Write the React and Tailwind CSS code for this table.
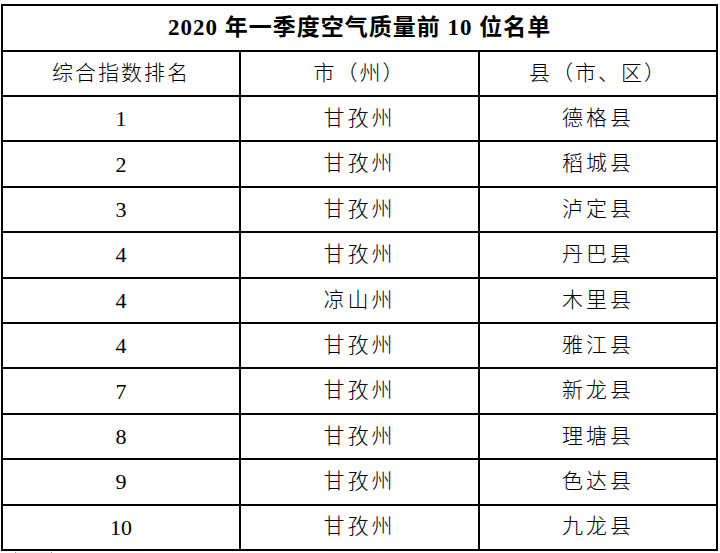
const rows = [
  ['1', '甘孜州', '德格县'],
  ['2', '甘孜州', '稻城县'],
  ['3', '甘孜州', '泸定县'],
  ['4', '甘孜州', '丹巴县'],
  ['4', '凉山州', '木里县'],
  ['4', '甘孜州', '雅江县'],
  ['7', '甘孜州', '新龙县'],
  ['8', '甘孜州', '理塘县'],
  ['9', '甘孜州', '色达县'],
  ['10', '甘孜州', '九龙县'],
]

function App() {
  return (
    <div className="w-[720px] h-[553px] bg-white overflow-hidden pt-[4px] font-['Liberation_Serif','Noto_Sans_CJK_SC',serif] text-black">
      <table className="w-[715px] ml-[1px] border-collapse table-fixed">
        <colgroup>
          <col className="w-[238px]" />
          <col className="w-[239px]" />
          <col className="w-[238px]" />
        </colgroup>
        <tbody>
          {/* Title */}
          <tr className="h-[46px]">
            <td colSpan={3} className="border-2 border-black text-center text-[23px] font-bold tracking-[1px] p-0">
              2020 年一季度空气质量前 10 位名单
            </td>
          </tr>
          <tr className="h-[45px]">
            <td className="border-2 border-black text-center text-[21px] tracking-[2px] p-0 font-light">综合指数排名</td>
            <td className="border-2 border-black text-center text-[21px] tracking-[2px] p-0 font-light">市（州）</td>
            <td className="border-2 border-black text-center text-[21px] tracking-[2px] p-0 font-light">县（市、区）</td>
          </tr>
          {rows.map((r, i) => (
            <tr key={i} className="h-[45.4px]">
              <td className="border-2 border-black text-center text-[22px] p-0">{r[0]}</td>
              <td className="border-2 border-black text-center text-[21px] tracking-[3px] p-0 font-light">{r[1]}</td>
              <td className="border-2 border-black text-center text-[21px] tracking-[3px] p-0 font-light">{r[2]}</td>
            </tr>
          ))}
        </tbody>
      </table>
      {/* resize handle marks */}
      <div className="ml-[15px] mt-[1px] w-[37px] h-[3px] border-x border-gray-400 bg-gray-100"></div>
    </div>
  )
}

export default App
